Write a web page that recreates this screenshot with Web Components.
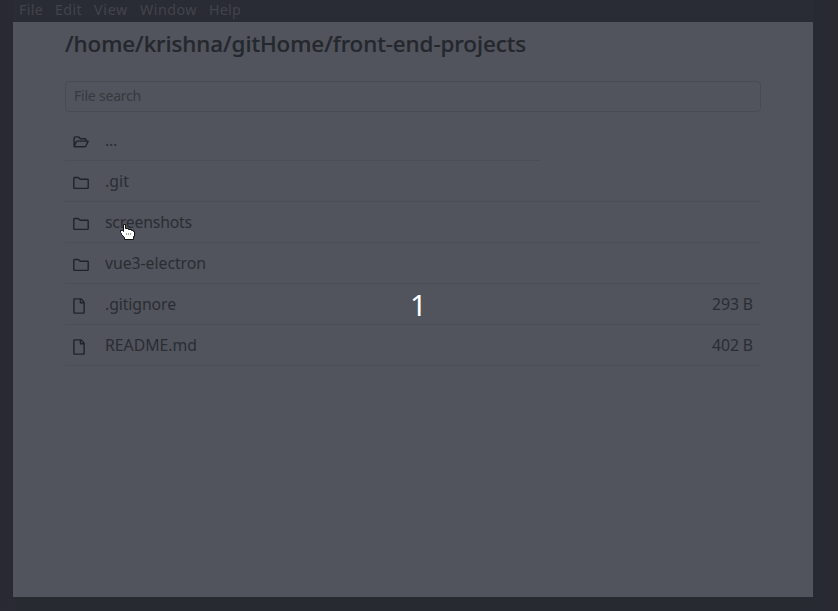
<!DOCTYPE html>
<html lang="en"><head><meta charset="utf-8"><title>File explorer</title>
<style>html,body{margin:0;height:100%;overflow:hidden;background:#292932}</style></head>
<body><explorer-window></explorer-window>
<script>
const define=(name,html,setup)=>customElements.define(name,class extends HTMLElement{
  connectedCallback(){
    if(this.shadowRoot)return;
    this.attachShadow({mode:'open'}).innerHTML=html;
    if(setup)setup(this,this.shadowRoot);
  }
});

/* Icons */
const icons={
  open:'<path d="M1.1 11.2V3.2Q1.1 1.9 2.3 1.9H5.7L7.3 3.8H12Q13 3.8 13 4.9V6M1.2 11.5L3.3 6.6Q3.6 6.1 4.2 6.1H15.1L12.9 11Q12.6 11.7 11.9 11.7H1.6Q1.1 11.7 1.1 11.2"/>',
  folder:'<path d="M.8 11.8V2.2Q.8 1.5 1.5 1.5H5.2L7.2 3.3H14.5Q15.2 3.3 15.2 4V11.8Q15.2 12.4 14.5 12.4H1.5Q.8 12.4 .8 11.8Z"/>',
  file:'<path d="M8.1 .9H1.6Q.9.9.9 1.6V14.4Q.9 15.1 1.6 15.1H10.4Q11.1 15.1 11.1 14.4V4.2L8.1 .9ZM7.4 1V4.7H11"/>'
};
define('entry-icon','<style>:host{display:block;width:16px;height:16px}svg{display:block;fill:none;stroke:#202329;stroke-width:1.4;stroke-linejoin:round}</style><svg width="16" height="16" viewBox="0 0 16 16"></svg>',
 (h,s)=>{s.querySelector('svg').innerHTML=icons[h.getAttribute('kind')];});

/* Pointer cursor */
define('hand-pointer',`<style>:host{display:block;position:absolute;left:119px;top:223px}svg{display:block}</style>
<svg width="18" height="18" viewBox="0 0 18 18"><path d="M4.5 1.5H6.5V5.5H9.5V6.5H12.5V7.5H14.5V8.5H15.5V13.5H14.5V16.5H5.5V14.5L2.5 11.5V10.5L1.5 9.5V7.5H3.5L4.5 8.5Z" fill="#fff" stroke="#111" stroke-width="1" stroke-linejoin="round"/><path d="M7.5 10V12M9.5 10V12M11.5 10V12" stroke="#aaa" stroke-width="1"/></svg>`);

define('menu-bar',`<style>:host{display:flex;gap:12px;height:22px;box-sizing:border-box;padding-left:6px;background:#292c34;color:#42444a;font:14.2px/20px "Noto Sans",sans-serif}</style>
<fit-text w="24">File</fit-text><fit-text w="27">Edit</fit-text><fit-text w="34">View</fit-text><fit-text w="57">Window</fit-text><fit-text w="32">Help</fit-text>`);

define('search-field',`<style>:host{display:flex;box-sizing:border-box;height:31px;width:696px;border:1px solid #484b51;border-radius:4px;padding-left:8px;color:#36393f;font:14px/28px "Noto Sans",sans-serif}</style><fit-text w="67">File search</fit-text>`);

define('file-row',`<style>:host{display:flex;box-sizing:border-box;width:696px;height:41px;border-bottom:1px solid #4b4e55;padding:0 8px;color:#2a2d33;font:15.8px/40px "Noto Sans",sans-serif}
:host([short]){width:476px}
entry-icon{margin:15px 16px 0 0}:host([kind=file]) entry-icon{margin-top:14px}::slotted([slot=size]){margin-left:auto}</style><slot></slot><slot name="size"></slot>`,
 (h,s)=>{const i=document.createElement('entry-icon');i.setAttribute('kind',h.getAttribute('kind'));s.insertBefore(i,s.querySelector('slot'));});

define('explorer-window',`<style>
:host{display:block;position:relative;width:838px;height:611px;box-sizing:border-box;padding-left:13px;background:linear-gradient(to right,#292932 0 4px,#282a32 13px 813px,#272a32 819px,#292932 824px)}
main{box-sizing:border-box;width:800px;height:575px;padding:0 52px;background:#51545c}
menu-bar{width:800px}
h1{margin:0;height:59px;color:#24272d;font:500 22.4px/44px "Noto Sans",sans-serif;-webkit-text-stroke:.2px #24272d;white-space:nowrap}
.list{padding-top:8px}
.count{position:absolute;left:410px;top:287px;color:#fff;font:29.5px/36px "Noto Sans",sans-serif}
</style>
<menu-bar></menu-bar>
<main><h1><fit-text w="461">/home/krishna/gitHome/front-end-projects</fit-text></h1>
<search-field></search-field>
<div class="list">
<file-row kind="open" short><fit-text w="12">...</fit-text></file-row>
<file-row kind="folder"><fit-text w="24">.git</fit-text></file-row>
<file-row kind="folder"><fit-text w="87">screenshots</fit-text></file-row>
<file-row kind="folder"><fit-text w="101">vue3-electron</fit-text></file-row>
<file-row kind="file"><fit-text w="71">.gitignore</fit-text><fit-text slot="size" w="41">293 B</fit-text></file-row>
<file-row kind="file"><fit-text w="92">README.md</fit-text><fit-text slot="size" w="41">402 B</fit-text></file-row>
</div></main>
<div class="count">1</div><hand-pointer></hand-pointer>`);

/* Label whose tracking is adjusted to a given width */
define('fit-text','<style>:host{display:inline-block;white-space:nowrap}span{display:inline-block}</style><span><slot></slot></span>',(h,s)=>{
  const w=+h.getAttribute('w'),t=s.querySelector('span'),n=h.textContent.length;
  t.style.letterSpacing=(w-t.getBoundingClientRect().width)/n+'px';
  h.style.width=w+'px';
});
</script></body></html>
